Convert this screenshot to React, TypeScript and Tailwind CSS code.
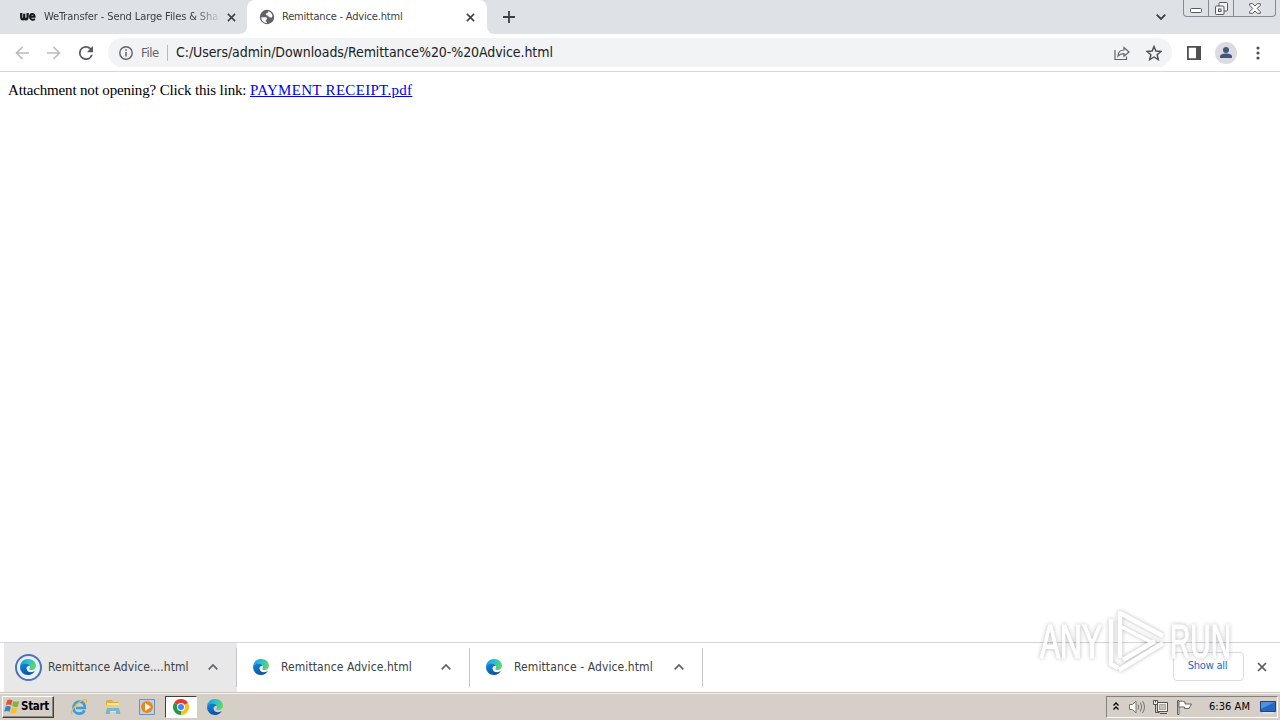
import type { ReactNode } from "react";

const uiFont = "font-['DejaVu_Sans_Condensed','DejaVu_Sans',sans-serif] [font-stretch:condensed]";

function CloseIcon({ className = "" }: { className?: string }) {
  return (
    <svg viewBox="0 0 10 10" className={className} fill="none" stroke="currentColor" strokeWidth="1.7">
      <path d="M1 1l8 8M9 1l-8 8" />
    </svg>
  );
}

function EdgeIcon({ className = "" }: { className?: string }) {
  return (
    <svg viewBox="0 0 16 16" className={className}>
      <defs>
        <linearGradient id="edgeTop" x1="0" y1="0.3" x2="1" y2="0.6">
          <stop offset="0" stopColor="#1b9de2" />
          <stop offset="0.5" stopColor="#2cc3c9" />
          <stop offset="1" stopColor="#66d957" />
        </linearGradient>
        <linearGradient id="edgeLow" x1="0" y1="0" x2="0.6" y2="1">
          <stop offset="0" stopColor="#1689d8" />
          <stop offset="1" stopColor="#0c4fa3" />
        </linearGradient>
      </defs>
      <path d="M0 8C0 3.300 3.600 0 8.200 0C13 0 16 3.300 16 6.800C16 9.500 14 11 11.800 11C10 11 9.200 10.400 9.200 9.900C9.200 9.400 10 9.300 10 8C10 6.200 8.300 4.800 6 4.800C2.800 4.800 .6 6.500 0 8Z" fill="url(#edgeTop)" />
      <path d="M0 8C.5 5.600 3 4.500 5.400 4.500C7.700 4.500 9.500 5.700 9.900 7.200C8.300 6.300 6.500 7.400 6.500 9.300C6.500 11.800 8.600 13.200 11 13.200C12.600 13.200 14 12.500 14.900 11.800C13.700 14.300 11.200 16 8 16C3.500 16 0 12.500 0 8Z" fill="url(#edgeLow)" />
    </svg>
  );
}

function TabStrip() {
  return (
    <div className="relative flex h-[34px] shrink-0 bg-[#dee1e6] text-[11px] text-[#3c4043]">
      <div className="flex w-[247px] items-center pl-5">
        <svg viewBox="0 0 16 10" className="h-[10px] w-4 shrink-0" fill="none" stroke="#17181a" strokeWidth="2.200">
          <path d="M1.200 1v3.800c0 3.400 3 3.400 3 0V1.800v3c0 3.400 3.400 3.400 3.400 0V1" />
          <path d="M10.400 4.800h4.200c0-3.900-4.600-3.600-4.600 0c0 3.300 3 3.400 4.900 2.300" strokeWidth="2" />
        </svg>
        <span className="ml-2 w-[175px] overflow-hidden whitespace-nowrap tracking-[-0.110px] [mask-image:linear-gradient(to_right,black_150px,transparent_178px)]">
          WeTransfer - Send Large Files &amp; Shared
        </span>
        <CloseIcon className="ml-[8px] size-[9px]" />
      </div>
      <div className="relative flex w-[240px] items-center rounded-t-lg bg-white pl-3">
        <svg viewBox="0 0 8 8" className="absolute bottom-0 -left-2 size-2" fill="white">
          <path d="M8 0v8H0c5 0 8-3 8-8z" />
        </svg>
        <svg viewBox="0 0 8 8" className="absolute -right-2 bottom-0 size-2" fill="white">
          <path d="M0 0v8h8C3 8 0 5 0 0z" />
        </svg>
        <svg viewBox="0 0 16 16" className="size-4">
          <circle cx="8" cy="8" r="7.200" fill="#5f6368" />
          <path d="M2.300 8.300h4.200c2.200 0 2.200 2.600.2 2.600v1.300c1 .2 1.300.9 1.300 1.700C4.800 14 2.200 11.500 2.300 8.300zM9.300 2.300c0 1.500-.8 1.900-2.300 2.100c-.3 1.500.3 2 2.300 2.100c0 1.900 1.600 2.100 3.700 1.900C14.300 6 12 3 9.300 2.300z" fill="white" />
        </svg>
        <span className="ml-[7px] w-[184px] whitespace-nowrap tracking-[-0.190px]">Remittance - Advice.html</span>
        <CloseIcon className="size-[9px]" />
      </div>
      <svg viewBox="0 0 12 12" className="mt-[11px] ml-4 size-3" stroke="#3c4043" strokeWidth="1.800">
        <path d="M6 0v12M0 6h12" />
      </svg>
      <svg viewBox="0 0 10 6" className="mt-[14px] ml-auto h-[6px] w-[10px]" fill="none" stroke="#3c4043" strokeWidth="1.800">
        <path d="M.7.7L5 5L9.300.7" />
      </svg>
      <div className="mr-[4px] ml-[17px] flex h-[17px] w-[93px] rounded-b border border-t-0 border-[#868b93] text-[#55595f]">
        <div className="flex w-[25px] justify-center border-r border-[#868b93]">
          <svg viewBox="0 0 12 5" className="mt-2 h-[5px] w-3" fill="white" stroke="currentColor">
            <rect x=".5" y=".5" width="11" height="4" rx="1" />
          </svg>
        </div>
        <div className="flex w-[25px] justify-center border-r border-[#868b93]">
          <svg viewBox="0 0 13 13" className="mt-[2px] size-[13px]" fill="#f4f5f7" stroke="currentColor">
            <rect x="4" y=".5" width="8.500" height="8.500" rx="1" />
            <rect x=".5" y="4" width="8.500" height="8.500" rx="1" />
            <rect x="3.500" y="7" width="2.500" height="2.500" />
          </svg>
        </div>
        <div className="flex flex-1 justify-center">
          <svg viewBox="0 0 12 11" className="mt-[3px] h-[11px] w-3" fill="white" stroke="currentColor">
            <path d="M.7.7h3L6 3L8.300.7h3v1.600L8.200 5.500l3.100 3.200v1.600h-3L6 8l-2.300 2.300h-3V8.700l3.100-3.200L.7 2.300z" />
          </svg>
        </div>
      </div>
    </div>
  );
}

function Toolbar() {
  return (
    <div className="flex h-[38px] shrink-0 items-center border-b border-[#d5d7da] bg-white text-[#5f6368]">
      <svg viewBox="0 0 14 14" className="ml-[15px] size-[14px]" fill="none" stroke="#babcbe" strokeWidth="1.700">
        <path d="M14 7H1.500M7.500 1L1.500 7l6 6" />
      </svg>
      <svg viewBox="0 0 14 14" className="ml-[18px] size-[14px]" fill="none" stroke="#babcbe" strokeWidth="1.700">
        <path d="M0 7h12.500M6.500 1l6 6l-6 6" />
      </svg>
      <svg viewBox="4 4 16 16" className="ml-[18px] size-[14px]" fill="#55595e">
        <path d="M17.650 6.350A7.960 7.960 0 0 0 12 4a8 8 0 1 0 7.730 10h-2.080A6 6 0 1 1 12 6c1.660 0 3.140.69 4.220 1.780L13 11h7V4z" />
      </svg>
      <div className="ml-[15px] flex h-[29px] w-[1064px] items-center rounded-full bg-[#f1f3f4] pl-[11px]">
        <svg viewBox="0 0 14 14" className="size-[14px]" fill="none" stroke="currentColor" strokeWidth="1.400">
          <circle cx="7" cy="7" r="6.200" />
          <path d="M7 6v4.500M7 3.300v1.500" strokeWidth="1.500" />
        </svg>
        <span className="ml-2 w-[19px] text-[13px] tracking-[-0.400px]">File</span>
        <span className="ml-[7px] h-4 w-px bg-[#b8babd]" />
        <span className="ml-2 text-[14px] tracking-[-0.080px] whitespace-nowrap text-[#202124]">
          C:/Users/admin/Downloads/Remittance%20-%20Advice.html
        </span>
        <svg viewBox="0 0 16 16" className="ml-auto size-4" fill="none" stroke="currentColor" strokeWidth="1.200">
          <path d="M1 5v9.500h11.500v-3" />
          <path d="M4 11c.2-4 2.200-6 6-6V2.500L15 7l-5 4.300V8.600c-3 0-4.600.7-6 2.400z" />
        </svg>
        <svg viewBox="1 1 22 22" className="mr-[10px] ml-4 size-4" fill="none" stroke="#4e5257" strokeWidth="2">
          <path d="M12 3l2.600 6.300l6.900.6l-5.200 4.500l1.600 6.700l-5.900-3.600l-5.900 3.600l1.600-6.700l-5.200-4.500l6.900-.6z" />
        </svg>
      </div>
      <svg viewBox="0 0 14 14" className="ml-[15px] size-[14px]" fill="none" stroke="#4e5257" strokeWidth="1.800">
        <path d="M.9.9h12.200v12.200H.9z" />
        <path d="M9 1h4v12H9z" fill="#4e5257" stroke="none" />
      </svg>
      <svg viewBox="0 0 22 22" className="ml-[14px] size-[22px]">
        <circle cx="11" cy="11" r="11" fill="#d9dce1" />
        <g fill="#45557a">
          <circle cx="11" cy="8" r="3" />
          <path d="M5 16v-1.500c0-2.200 3.500-3 6-3s6 .8 6 3V16z" />
        </g>
      </svg>
      <svg viewBox="0 0 4 14" className="ml-[19px] h-[14px] w-1" fill="#4e5257">
        <circle cx="2" cy="2" r="1.600" />
        <circle cx="2" cy="7" r="1.600" />
        <circle cx="2" cy="12" r="1.600" />
      </svg>
    </div>
  );
}

function Download({ name, active, tracking }: { name: string; active?: boolean; tracking: string }) {
  return (
    <div className={`relative flex h-full w-[233px] items-center pb-px ${active ? "bg-[#e8e8e8]" : ""}`}>
      <div className={`ml-[11px] flex size-[27px] items-center justify-center ${active ? "rounded-full border-2 border-[#4a73b8] bg-[#eaf0f9] pr-px" : "pr-[2px]"}`}>
        <EdgeIcon className="size-4" />
      </div>
      <span className={`ml-[6px] w-[160px] pb-px text-[12px] whitespace-nowrap text-[#3c4043] ${tracking}`}>{name}</span>
      <svg viewBox="0 0 10 6" className="h-[6px] w-[10px]" fill="none" stroke="#5f6368" strokeWidth="1.700">
        <path d="M.7 5.300L5 1l4.300 4.300" />
      </svg>
      <span className="absolute top-[5px] right-0 h-[39px] w-px bg-[#c4c6c9]" />
    </div>
  );
}

function DownloadShelf() {
  return (
    <div className="flex h-[50px] shrink-0 items-center border-t border-[#d3d5d8] bg-white pl-1">
      <Download name="Remittance Advice....html" active tracking="tracking-[0.050px]" />
      <Download name="Remittance Advice.html" tracking="tracking-[0.080px]" />
      <Download name="Remittance - Advice.html" tracking="tracking-[0.100px]" />
      <button type="button" className="mb-[2px] ml-auto h-[29px] w-[71px] rounded border border-[#dadce0] pr-[2px] text-[11px] tracking-[-0.250px] text-[#1967d2]">
        Show all
      </button>
      <CloseIcon className="mr-[13px] mb-px ml-[13px] size-[10px] text-[#55595e]" />
    </div>
  );
}

function TaskButton({ children, active }: { children: ReactNode; active?: boolean }) {
  return (
    <div className={`flex h-[22px] w-[32px] items-center justify-center ${active ? "border border-t-[#404040] border-r-white border-b-white border-l-[#404040] bg-white" : ""}`}>
      {children}
    </div>
  );
}

function Taskbar() {
  return (
    <div className="flex h-[28px] shrink-0 items-center border-t border-[#c9c6c2] bg-[#d6cfc7] text-[11px] text-black shadow-[inset_0_1px_0_#f5f3f0]">
      <div className="ml-[2px] flex h-[22px] w-[52px] items-center border border-t-white border-r-[#404040] border-b-[#404040] border-l-white pl-px shadow-[inset_-1px_-1px_0_#8c8780]">
        <svg viewBox="0 0 16 16" className="size-[17px] shrink-0">
          <path d="M3 2c2-1 3.500-.7 5 .3L6.800 7C5 6 3.500 6 1.800 6.800z" fill="#e5532d" />
          <path d="M8.800 2.800c2 1 3.700 1 5.700.1L13 8c-2 .9-3.500.7-5.300-.4z" fill="#79b943" />
          <path d="M1.500 8c2-.8 3.500-.6 5 .2L5.200 13c-1.700-1-3.200-1-5 0z" fill="#3783cf" />
          <path d="M7.400 8.700c2 1 3.500 1 5.400.2l-1.400 5c-2 .8-3.500.6-5.300-.3z" fill="#f5c22b" />
        </svg>
        <span className="pt-px text-[11.500px] font-bold tracking-[-0.300px]">Start</span>
      </div>
      <div className="ml-[9px] flex items-center gap-[2px]">
        <TaskButton>
          <svg viewBox="0 0 18 18" className="size-[18px]" fill="none">
            <path d="M14.500 12.500C13 15 11.300 15.700 9.300 15.700C5.800 15.700 3.500 13 3.500 9.700C3.500 6.300 6 3.700 9.300 3.700C13 3.700 15 6.300 14.800 10H6" stroke="#3b9ddd" strokeWidth="2.700" />
            <path d="M2 16C-.5 13.500 8 3 14 1.800C17 1.300 17 3 16 5" stroke="#e9b93c" strokeWidth="1.300" />
          </svg>
        </TaskButton>
        <TaskButton>
          <svg viewBox="0 0 18 18" className="size-[18px]">
            <path d="M2 3l1-1h5l1 2h6v4H2z" fill="#dcae48" />
            <path d="M3 5h12v9H3z" fill="#f7e4a0" />
            <path d="M1.500 7h14v4h-14z" fill="#f1cf70" />
            <path d="M3 10h12l1.500 6H12v-3H6v3H1.500z" fill="#73b6d8" />
          </svg>
        </TaskButton>
        <TaskButton>
          <svg viewBox="0 0 16 16" className="size-4">
            <path d="M.5.5h15v15H.5z" fill="#b9d5ec" stroke="#6993bc" />
            <circle cx="8" cy="8" r="6" fill="#ef8519" />
            <path d="M6 4l6 4l-6 4z" fill="white" />
          </svg>
        </TaskButton>
        <TaskButton active>
          <svg viewBox="0 0 16 16" className="size-4">
            <path d="M8 8L1.070 4A8 8 0 0 1 14.930 4z" fill="#e33b2e" />
            <path d="M8 8L14.930 4A8 8 0 0 1 8 16z" fill="#fbc116" />
            <path d="M8 8v8A8 8 0 0 1 1.070 4z" fill="#279847" />
            <circle cx="8" cy="8" r="4" fill="white" />
            <circle cx="8" cy="8" r="3" fill="#4285f4" />
          </svg>
        </TaskButton>
        <TaskButton>
          <EdgeIcon className="size-4" />
        </TaskButton>
      </div>
      <div className="mr-[2px] ml-auto flex h-[22px] w-[172px] items-center border border-t-[#85807a] border-r-white border-b-white border-l-[#85807a] pl-[6px]">
        <svg viewBox="0 0 6 8" className="mb-[2px] h-2 w-[6px]" fill="none" stroke="black" strokeWidth="1.300">
          <path d="M.5 3.500L3 1l2.500 2.500M.5 7.500L3 5l2.500 2.500" />
        </svg>
        <svg viewBox="0 0 18 16" className="ml-[9px] h-4 w-[18px]" fill="white" stroke="#77736e">
          <path d="M1.500 5.500h3L8 2v12l-3.500-3.500h-3z" />
          <path d="M10 5.500q1.500 2.500 0 5M12.300 3.500q3 4.500 0 9M14.500 2q4 6 0 12" fill="none" />
        </svg>
        <svg viewBox="0 0 17 16" className="ml-[6px] h-4 w-[17px]" fill="#f5f3f0" stroke="#55524e">
          <path d="M5.500 3.500h10v9h-10z" />
          <path d="M7.500 5.500h6v5h-6z" fill="#c4c0ba" stroke="#aaa69f" />
          <path d="M8 14.500h7M3.500 5v8.500h4" fill="none" />
          <path d="M1.500 1.500h4v4h-4z" />
          <path d="M3.500 1v2.500" />
        </svg>
        <svg viewBox="0 0 17 16" className="ml-[7px] h-4 w-[17px]" fill="white" stroke="#66625e">
          <path d="M1.500 1.500v14h1.500v-14z" />
          <path d="M3 2.500c3-1 4 .3 6 .3v2.200h6.500L13 9.500H8.500V8C6 8 5 7.500 3 8.500z" />
        </svg>
        <span className="ml-[16px] w-[50px] pt-px whitespace-nowrap tracking-[0.050px]">6:36 AM</span>
        <svg viewBox="0 0 16 14" className="ml-px h-[14px] w-4">
          <path d="M.5 1.500h15v10H.5z" fill="#2468c4" stroke="#244273" />
          <path d="M1 2h14L1 9z" fill="#4f91e1" />
          <path d="M3 12h10v1.500H3z" fill="#dbe4ed" />
        </svg>
      </div>
    </div>
  );
}

function Watermark() {
  return (
    <svg viewBox="0 0 200 70" className="pointer-events-none absolute top-[606px] left-[1036px] h-[70px] w-[200px] overflow-visible opacity-80 drop-shadow-[0_0_2px_rgba(0,0,0,0.35)]">
      <g fill="white" stroke="white" strokeWidth="1.200" className="font-['Liberation_Sans_Narrow','Liberation_Sans',sans-serif]" fontSize="48">
        <text x="4" y="52" textLength="62" lengthAdjust="spacingAndGlyphs">ANY</text>
        <text x="134" y="52" textLength="61" lengthAdjust="spacingAndGlyphs">RUN</text>
      </g>
      <g fill="none" stroke="white" strokeWidth="4.500" strokeLinejoin="round">
        <path d="M75 13v45l7 4" />
        <path d="M84 49V7l43 23" />
        <path d="M84 52V20l33 17" strokeWidth="3.500" />
        <path d="M83 64l44-27M87 54l32-19" />
      </g>
    </svg>
  );
}

export default function App() {
  return (
    <div className={`relative flex h-[720px] w-[1280px] flex-col overflow-hidden bg-white ${uiFont}`}>
      <TabStrip />
      <Toolbar />
      <main className="flex-1 p-2 font-['Liberation_Serif',serif] text-[15px] leading-[21px] tracking-[-0.155px] text-black">
        Attachment not opening? Click this link:{" "}
        <a href="#" className="tracking-[0.300px] text-[#0000ee] underline">PAYMENT RECEIPT.pdf</a>
      </main>
      <DownloadShelf />
      <Taskbar />
      <Watermark />
    </div>
  );
}
